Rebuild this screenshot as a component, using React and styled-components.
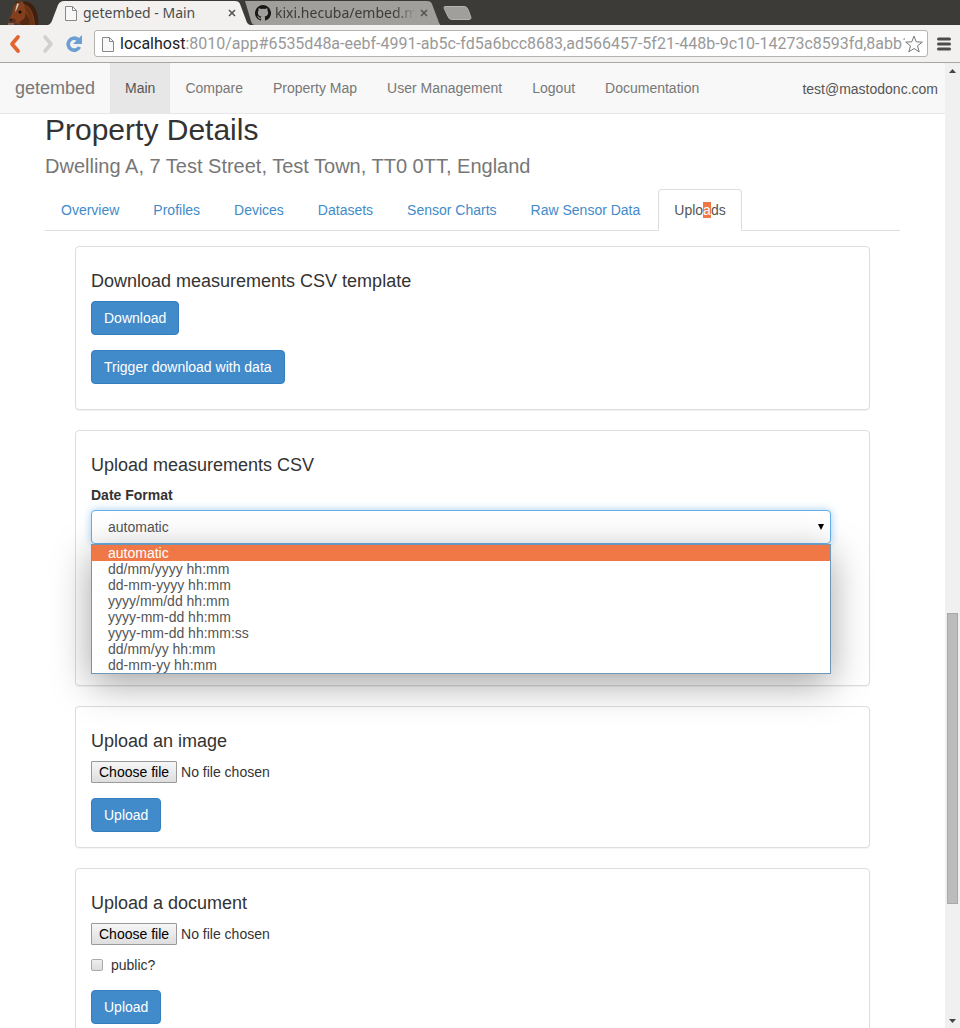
import React from "react";
import styled, { createGlobalStyle } from "styled-components";

const GlobalStyle = createGlobalStyle`
  *, *::before, *::after { box-sizing: border-box; }
  body {
    margin: 0;
    background: #fff;
    color: #333;
    font-family: "Liberation Sans", Arial, sans-serif;
    font-size: 14px;
    line-height: 20px;
  }
  button, input, select { font: inherit; }
`;

const Window = styled.div`
  display: flex;
  flex-direction: column;
  height: 100vh;
  overflow: hidden;
`;

/* Browser chrome */

const TabStrip = styled.header`
  display: flex;
  flex: none;
  height: 25px;
  padding-left: 8px;
  background: #3c3b37;
  font-family: "Noto Sans", "Open Sans", sans-serif;
`;

const HorseIcon = styled.svg`
  flex: none;
  width: 32px;
  height: 25px;
  margin-right: 8px;
`;

const BrowserTab = styled.div`
  position: relative;
  z-index: ${(p) => (p.$active ? 1 : 0)};
  display: flex;
  align-items: center;
  flex: none;
  width: ${(p) => (p.$active ? "202px" : "196px")};
  height: 25px;
  margin-right: ${(p) => (p.$active ? "-6px" : "0")};
  padding: 1px ${(p) => (p.$active ? "14px" : "12px")} 0 ${(p) => (p.$active ? "17px" : "11px")};
  gap: ${(p) => (p.$active ? "6px" : "4px")};
  color: ${(p) => (p.$active ? "#4c4c4c" : "#3c3b37")};
`;

const TabShape = styled.svg`
  position: absolute;
  inset: 0;
  width: 100%;
  height: 100%;
`;

const TabIcon = styled.svg`
  position: relative;
  flex: none;
  width: ${(p) => p.$size || 12}px;
  height: 16px;
`;

const TabTitle = styled.span`
  position: relative;
  flex: 1;
  overflow: hidden;
  white-space: nowrap;
  font-size: 14px;
  line-height: 20px;
  ${(p) => p.$fade && "mask-image: linear-gradient(to right, #000 85%, transparent);"}
`;

const PlainButton = styled.button`
  position: relative;
  display: flex;
  flex: none;
  align-items: center;
  justify-content: center;
  padding: 0;
  border: 0;
  background: none;
  color: inherit;
`;

const Toolbar = styled.div`
  display: flex;
  flex: none;
  align-items: center;
  height: 38px;
  padding: 0 9px 0 8px;
  border-bottom: 1px solid #a9a6a2;
  background: #f2f1f0;
`;

const NavButton = styled(PlainButton)`
  width: 18px;
  height: 20px;
  margin-right: ${(p) => p.$gap || 0}px;
`;

const AddressBar = styled.div`
  display: flex;
  flex: 1;
  align-items: center;
  min-width: 0;
  height: 27px;
  margin-right: 9px;
  padding: 0 4px 0 7px;
  border: 1px solid #b5b3b0;
  border-radius: 3px;
  background: #fff;
  color: #222;
  font-family: Roboto, "Noto Sans", sans-serif;
  font-size: 16px;
  line-height: 22px;
`;

const PageIcon = styled.svg`
  flex: none;
  width: 12px;
  height: 16px;
  margin-right: 6px;
`;

const AddressInput = styled.input`
  flex: 1;
  min-width: 0;
  padding: 0;
  border: 0;
  outline: 0;
  background: none;
  color: #999;
`;

/* Page */

const Viewport = styled.div`
  display: flex;
  flex: 1;
  min-height: 0;
`;

const Page = styled.div`
  flex: 1;
  min-width: 0;
  overflow: hidden;
`;

const Navbar = styled.nav`
  display: flex;
  height: 51px;
  border-bottom: 1px solid #e7e7e7;
  background: #f8f8f8;
`;

const Brand = styled.a`
  padding: 15px;
  color: #777;
  font-size: 18px;
  text-decoration: none;
`;

const NavLink = styled.a`
  padding: 15px;
  background: ${(p) => (p.$active ? "#e7e7e7" : "none")};
  color: ${(p) => (p.$active ? "#555" : "#777")};
  text-decoration: none;
`;

const Account = styled.span`
  margin-left: auto;
  padding: 16px 7px 14px;
  color: #555;
`;

const Content = styled.main`
  padding: 0 45px;
`;

const Title = styled.h2`
  margin: 0 0 11px;
  font-size: 30px;
  font-weight: 400;
  line-height: 31px;
`;

const Address = styled.p`
  margin: 0 0 13px;
  color: #777;
  font-size: 20px;
  line-height: 20px;
`;

const Tabs = styled.nav`
  display: flex;
  margin-bottom: 15px;
  border-bottom: 1px solid #ddd;
`;

const Tab = styled.a`
  margin: 0 2px -1px 0;
  padding: 10px 15px;
  border: 1px solid ${(p) => (p.$active ? "#ddd" : "transparent")};
  border-bottom-color: ${(p) => (p.$active ? "#fff" : "transparent")};
  border-radius: 4px 4px 0 0;
  background: ${(p) => (p.$active ? "#fff" : "none")};
  color: ${(p) => (p.$active ? "#555" : "#428bca")};
  text-decoration: none;
`;

const Found = styled.mark`
  background: #f07746;
  color: #fff;
`;

const Panels = styled.div`
  display: flex;
  flex-direction: column;
  gap: 20px;
  padding: 0 30px;
`;

const Card = styled.section`
  display: flex;
  flex-direction: column;
  align-items: flex-start;
  min-height: ${(p) => p.$min || 0}px;
  padding: 25px 15px ${(p) => p.$bottom || 15}px;
  border: 1px solid #ddd;
  border-radius: 4px;
  background: #fff;
  box-shadow: 0 1px 1px rgba(0, 0, 0, 0.05);
`;

const CardTitle = styled.h4`
  margin: 0 0 10px;
  font-size: 18px;
  font-weight: 400;
  line-height: 19px;
`;

const PrimaryButton = styled.button`
  height: 34px;
  padding: 6px 12px;
  border: 1px solid #357ebd;
  border-radius: 4px;
  background: #428bca;
  color: #fff;

  & + & { margin-top: 15px; }
`;

const FieldLabel = styled.label`
  margin-bottom: 5px;
  font-weight: 700;
`;

const SelectField = styled.div`
  position: relative;
  align-self: stretch;
  margin-right: 23px;
`;

const Select = styled.select`
  display: block;
  width: 100%;
  height: 34px;
  padding: 6px 16px;
  border: 1px solid #66afe9;
  border-radius: 4px;
  outline: 0;
  appearance: none;
  background: #fff;
  box-shadow: 0 0 8px rgba(102, 175, 233, 0.6);
  color: #555;
`;

const SelectArrow = styled.svg`
  position: absolute;
  top: 14px;
  right: 7px;
  width: 6px;
  height: 6px;
  pointer-events: none;
`;

const OptionList = styled.ul`
  position: absolute;
  z-index: 2;
  top: 100%;
  left: 0;
  right: 0;
  margin: 0;
  padding: 0;
  border: 1px solid #7096b8;
  background: #fff;
  box-shadow: 0 10px 36px rgba(0, 0, 0, 0.36);
  color: #555;
  line-height: 16px;
  list-style: none;
`;

const Option = styled.li`
  padding: 0 16px;
  background: ${(p) => (p.$selected ? "#f07746" : "none")};
  color: ${(p) => (p.$selected ? "#fff" : "inherit")};
`;

const FileLabel = styled.label`
  display: flex;
  align-items: center;
  gap: 4px;
  margin-bottom: ${(p) => p.$gap || 15}px;
`;

const FileInput = styled.input`
  position: absolute;
  width: 1px;
  height: 1px;
  opacity: 0;
`;

const FileButton = styled.span`
  padding: 0 7px;
  border: 1px solid #999;
  border-radius: 1px;
  background: linear-gradient(#f6f6f6, #dedede);
  color: #000;
`;

const CheckLabel = styled.label`
  display: flex;
  align-items: center;
  gap: 8px;
  margin-bottom: 15px;
`;

const Checkbox = styled.input`
  width: 12px;
  height: 12px;
  margin: 0;
  border: 1px solid #aaa;
  border-radius: 2px;
  appearance: none;
  background: linear-gradient(#eee, #dcdcdc);
`;

const Scrollbar = styled.div`
  display: flex;
  flex: none;
  flex-direction: column;
  align-items: center;
  width: 15px;
  background: #f0f0f0;
`;

const ScrollButton = styled(PlainButton)`
  width: 15px;
  height: 15px;
`;

const ScrollGap = styled.div`
  flex: ${(p) => p.$share} 0 0;
`;

const ScrollThumb = styled.div`
  flex: 290 0 0;
  width: 11px;
  border: 1px solid #a8a8a8;
  background: #bcbcbc;
`;

const navItems = ["Main", "Compare", "Property Map", "User Management", "Logout", "Documentation"];
const sections = ["Overview", "Profiles", "Devices", "Datasets", "Sensor Charts", "Raw Sensor Data"];
const formats = [
  "automatic",
  "dd/mm/yyyy hh:mm",
  "dd-mm-yyyy hh:mm",
  "yyyy/mm/dd hh:mm",
  "yyyy-mm-dd hh:mm",
  "yyyy-mm-dd hh:mm:ss",
  "dd/mm/yy hh:mm",
  "dd-mm-yy hh:mm",
];

const pageOutline = (
  <>
    <path d="M.5 1.5h7l4 4v10H.5z" fill="#f8f8f8" stroke="#888" />
    <path d="M7.5 1.5v4h4" fill="none" stroke="#888" />
  </>
);

function CloseButton({ label }) {
  return (
    <PlainButton aria-label={label}>
      <svg width="8" height="8" viewBox="0 0 8 8">
        <path d="M1 1l6 6M7 1L1 7" stroke="#555" strokeWidth="1.6" />
      </svg>
    </PlainButton>
  );
}

function FilePicker({ gap }) {
  return (
    <FileLabel $gap={gap}>
      <FileInput type="file" />
      <FileButton>Choose file</FileButton>
      <span>No file chosen</span>
    </FileLabel>
  );
}

function BrowserChrome() {
  return (
    <>
      <TabStrip>
        <HorseIcon viewBox="0 0 32 25" aria-hidden="true">
          <path d="M13 2c8-2 14 3 16 11 1 5 2 9 1 12H12z" fill="#3f1f10" />
          <path d="M7 4l1-4 3 3 3-2 2 3c6 2 10 8 11 21H12l-2-2-5 1-4-1c-1-2 0-4 2-7 2-4 2-9 4-12z" fill="#84401d" />
          <path d="M16 4c6 3 9 9 10 21h-5c1-6 0-10-3-13z" fill="#6a3216" />
          <path d="M8 0l3 3-2 4-2-3z" fill="#4f2611" />
          <path d="M9 3l2 1-2 5-2 3z" fill="#d9c3b2" />
          <path d="M17 13c1 4-1 7-6 9l2 3h8c1-5 0-9-4-12z" fill="#55280f" />
          <path d="M1 19l4-1 3 2-1 4-4 1-2-2z" fill="#5c3020" />
          <circle cx="12" cy="12" r="1.600" fill="#130a05" />
          <circle cx="3" cy="20" r="1" fill="#1c0e08" />
          <path d="M0 24l6 0" fill="none" stroke="#b59683" />
        </HorseIcon>
        <BrowserTab $active>
          <TabShape viewBox="0 0 202 25" preserveAspectRatio="none" aria-hidden="true">
            <path d="M0 25c3-1 4-4 5-7l5-13q2-4 6-4h171q4 0 5 3l6 16q1 4 4 5z" fill="#f2f1f0" />
          </TabShape>
          <TabIcon viewBox="0 0 12 16" aria-hidden="true">{pageOutline}</TabIcon>
          <TabTitle>getembed - Main</TabTitle>
          <CloseButton label="Close getembed tab" />
        </BrowserTab>
        <BrowserTab>
          <TabShape viewBox="0 0 196 25" preserveAspectRatio="none" aria-hidden="true">
            <path d="M1 1h182q4 0 5 3l6 16q1 4 3 5H11q-3 0-4-4z" fill="#a09f9c" />
          </TabShape>
          <TabIcon $size={16} viewBox="0 0 16 16" aria-hidden="true">
            <path d="M8 0a8 8 0 0 0-2.5 15.6c.4 0 .5-.2.5-.4v-1.5c-2.2.5-2.7-1-2.7-1-.4-.9-.9-1.2-.9-1.2-.7-.5.1-.5.1-.5.8.1 1.2.8 1.2.8.7 1.3 1.9.9 2.3.7.1-.5.3-.9.5-1.1-1.8-.2-3.6-.9-3.6-4 0-.9.3-1.6.8-2.1-.1-.2-.4-1 .1-2.1 0 0 .7-.2 2.2.8a7.7 7.7 0 0 1 4 0c1.5-1 2.2-.8 2.2-.8.5 1.1.2 1.9.1 2.1.5.6.8 1.3.8 2.1 0 3.1-1.9 3.8-3.6 4 .3.3.5.8.5 1.5v2.3c0 .2.1.5.5.4A8 8 0 0 0 8 0z" fill="#171717" />
          </TabIcon>
          <TabTitle $fade>kixi.hecuba/embed.md</TabTitle>
          <CloseButton label="Close kixi.hecuba tab" />
        </BrowserTab>
        <PlainButton aria-label="New tab">
          <svg width="34" height="25" viewBox="0 0 34 25">
            <path d="M5 6.500h19q3 0 4 3l3 8q0 2-2 2H12q-3 0-4-3L4 8q0-1.500 1-1.500z" fill="#a09f9c" stroke="#b4b3b0" />
          </svg>
        </PlainButton>
      </TabStrip>
      <Toolbar>
        <NavButton aria-label="Back" $gap={11}>
          <svg width="18" height="20" viewBox="0 0 18 20">
            <path d="M10 3L4 10l6 7" fill="none" stroke="#e2652f" strokeWidth="3.800" strokeLinecap="round" strokeLinejoin="round" />
          </svg>
        </NavButton>
        <NavButton aria-label="Forward" $gap={10}>
          <svg width="18" height="20" viewBox="0 0 18 20">
            <path d="M8 3l6 7-6 7" fill="none" stroke="#d2d0cd" strokeWidth="3.600" strokeLinecap="round" strokeLinejoin="round" />
          </svg>
        </NavButton>
        <NavButton aria-label="Reload" $gap={11}>
          <svg width="18" height="18" viewBox="0 0 18 18">
            <path d="M14.500 12a6 6 0 1 1-1.500-7.500" fill="none" stroke="#6b9fd4" strokeWidth="3.600" />
            <path d="M17 0v9H8z" fill="#6b9fd4" />
          </svg>
        </NavButton>
        <AddressBar>
          <PageIcon viewBox="0 0 12 16" aria-hidden="true">{pageOutline}</PageIcon>
          <span>localhost</span>
          <AddressInput
            aria-label="Address"
            defaultValue=":8010/app#6535d48a-eebf-4991-ab5c-fd5a6bcc8683,ad566457-5f21-448b-9c10-14273c8593fd,8abb1"
          />
          <PlainButton aria-label="Bookmark this page">
            <svg width="18" height="18" viewBox="0 0 18 18">
              <path d="M9 1l2.200 5.800 6.100.3-4.800 3.800 1.700 6L9 13.500l-5.200 3.400 1.700-6L.7 7.100l6.100-.3z" fill="#fff" stroke="#777" strokeLinejoin="round" />
            </svg>
          </PlainButton>
        </AddressBar>
        <PlainButton aria-label="Menu">
          <svg width="14" height="14" viewBox="0 0 14 14">
            <path d="M1.500 2h11M1.500 7h11M1.500 12h11" stroke="#4c4c4c" strokeWidth="3" strokeLinecap="round" />
          </svg>
        </PlainButton>
      </Toolbar>
    </>
  );
}

export default function App() {
  return (
    <Window>
      <GlobalStyle />
      <BrowserChrome />
      <Viewport>
        <Page>
          <Navbar>
            <Brand href="#">getembed</Brand>
            {navItems.map((item, i) => (
              <NavLink key={item} href="#" $active={i === 0}>{item}</NavLink>
            ))}
            <Account>test@mastodonc.com</Account>
          </Navbar>
          <Content>
            <Title>Property Details</Title>
            <Address>Dwelling A, 7 Test Street, Test Town, TT0 0TT, England</Address>
            <Tabs>
              {sections.map((name) => <Tab key={name} href="#">{name}</Tab>)}
              <Tab href="#" $active>Uplo<Found>a</Found>ds</Tab>
            </Tabs>
            <Panels>
              <Card $bottom={25}>
                <CardTitle>Download measurements CSV template</CardTitle>
                <PrimaryButton>Download</PrimaryButton>
                <PrimaryButton>Trigger download with data</PrimaryButton>
              </Card>
              <Card $min={256}>
                <CardTitle>Upload measurements CSV</CardTitle>
                <FieldLabel htmlFor="date-format">Date Format</FieldLabel>
                <SelectField>
                  <Select id="date-format" defaultValue="automatic">
                    {formats.map((f) => <option key={f}>{f}</option>)}
                  </Select>
                  <SelectArrow viewBox="0 0 7 7" aria-hidden="true"><path d="M0 0h7L3.500 7z" /></SelectArrow>
                  <OptionList role="listbox" aria-label="Date Format">
                    {formats.map((f, i) => (
                      <Option key={f} role="option" aria-selected={i === 0} $selected={i === 0}>{f}</Option>
                    ))}
                  </OptionList>
                </SelectField>
              </Card>
              <Card>
                <CardTitle>Upload an image</CardTitle>
                <FilePicker />
                <PrimaryButton>Upload</PrimaryButton>
              </Card>
              <Card>
                <CardTitle>Upload a document</CardTitle>
                <FilePicker gap={10} />
                <CheckLabel><Checkbox type="checkbox" />public?</CheckLabel>
                <PrimaryButton>Upload</PrimaryButton>
              </Card>
            </Panels>
          </Content>
        </Page>
        <Scrollbar>
          <ScrollButton aria-label="Scroll up">
            <svg width="7" height="4" viewBox="0 0 7 4"><path d="M0 4h7L3.500 0z" fill="#444" /></svg>
          </ScrollButton>
          <ScrollGap $share={537} />
          <ScrollThumb />
          <ScrollGap $share={109} />
          <ScrollButton aria-label="Scroll down">
            <svg width="7" height="4" viewBox="0 0 7 4"><path d="M0 0h7L3.500 4z" fill="#444" /></svg>
          </ScrollButton>
        </Scrollbar>
      </Viewport>
    </Window>
  );
}
